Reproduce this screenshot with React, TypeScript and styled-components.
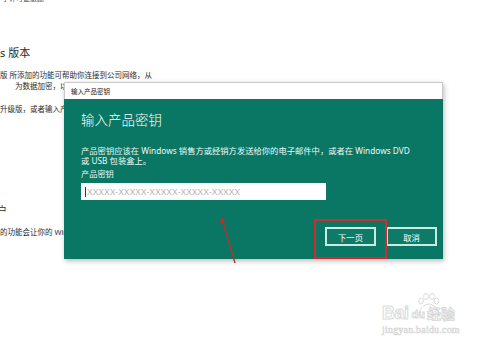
import React from "react";
import styled, { createGlobalStyle } from "styled-components";

const Global = createGlobalStyle`
  html, body { margin: 0; padding: 0; background: #ffffff; }
  body { width: 500px; height: 348px; overflow: hidden; }
`;

const FONT = `"Noto Sans", "Noto Sans CJK SC", sans-serif`;

const Page = styled.div`
  position: relative;
  width: 500px;
  height: 348px;
  overflow: hidden;
  background: #fff;
  font-family: ${FONT};
`;

const BgColumn = styled.div`
  display: flex;
  flex-direction: column;
  padding-left: 0;
  color: #2b2b2b;
`;

const BgLine = styled.div<{ $top: number; $indent?: number; $size?: number; $color?: string; $shift?: number }>`
  margin-top: ${(p) => p.$top}px;
  padding-left: ${(p) => p.$indent ?? 0}px;
  margin-left: ${(p) => p.$shift ?? 0}px;
  font-size: ${(p) => p.$size ?? 7.5}px;
  line-height: ${(p) => Math.round((p.$size ?? 7.5) + 3)}px;
  color: ${(p) => p.$color ?? "#2b2b2b"};
  white-space: nowrap;
`;

const Dialog = styled.div`
  position: absolute;
  left: 64px;
  top: 82px;
  width: 379px;
  display: flex;
  flex-direction: column;
  box-shadow: 1px 2px 5px rgba(0, 0, 0, 0.28);
`;

const TitleBar = styled.div`
  height: 17px;
  box-sizing: border-box;
  border: 1px solid #c9c9c9;
  border-bottom: none;
  background: #ffffff;
  display: flex;
  align-items: center;
  padding-left: 6px;
  font-size: 6.5px;
  color: #222;
`;

const Body = styled.div`
  height: 160px;
  box-sizing: border-box;
  background: #0a7764;
  padding: 13px 6px 0 17px;
  display: flex;
  flex-direction: column;
  color: #ffffff;
`;

const Heading = styled.div`
  font-size: 13.4px;
  line-height: 16px;
  font-weight: 300;
  letter-spacing: 0.1px;
`;

const Desc = styled.div`
  margin-top: 18px;
  display: flex;
  flex-direction: column;
  font-size: 8.3px;
  line-height: 10px;
  color: #eef7f5;
`;

const DescLine = styled.span`
  white-space: nowrap;
`;

const Label = styled.div`
  margin-top: 3px;
  font-size: 8.2px;
  line-height: 10px;
  color: #eef7f5;
`;

const KeyInput = styled.div`
  margin-top: 4px;
  width: 245px;
  height: 17px;
  box-sizing: border-box;
  background: #ffffff;
  display: flex;
  align-items: center;
  padding-left: 4px;
  gap: 1px;
  font-family: "Liberation Sans", Arial, sans-serif;
  font-size: 8.5px;
  color: #b4b4b4;
`;

const Caret = styled.span`
  width: 1px;
  height: 10px;
  background: #333;
`;

const ButtonRow = styled.div`
  margin-top: 27px;
  display: flex;
  justify-content: flex-end;
  gap: 10px;
`;

const Button = styled.div`
  width: 51px;
  height: 19px;
  box-sizing: border-box;
  border: 2px solid #c8ebe3;
  display: flex;
  align-items: center;
  justify-content: center;
  font-size: 8.3px;
  color: #ffffff;
  background: #0d7b68;
`;

const Highlight = styled.div`
  position: absolute;
  left: 314px;
  top: 219px;
  width: 73px;
  height: 40px;
  box-sizing: border-box;
  border: 2px solid #cf2b30;
`;

const ArrowSvg = styled.svg`
  position: absolute;
  left: 0;
  top: 0;
  width: 500px;
  height: 348px;
  pointer-events: none;
`;

const Watermark = styled.div`
  position: absolute;
  left: 382px;
  top: 290px;
  width: 95px;
  display: flex;
  flex-direction: column;
  color: #e2e2e2;
`;

const MarkTop = styled.div`
  position: relative;
  display: flex;
  align-items: flex-end;
  height: 32px;
  font-family: "Liberation Sans", Arial, sans-serif;
`;

const MarkBai = styled.span`
  font-size: 18px;
  line-height: 18px;
  font-weight: 700;
  color: #fff;
  -webkit-text-stroke: 1px #dcdcdc;
  letter-spacing: -0.5px;
`;

const MarkDu = styled.span`
  font-size: 11px;
  line-height: 14px;
  font-weight: 700;
  color: #fff;
  -webkit-text-stroke: 0.8px #d6d6d6;
  margin: 0 2px 1px 3px;
`;

const MarkJy = styled.span`
  font-family: "Noto Sans CJK SC", sans-serif;
  font-size: 14px;
  line-height: 17px;
  font-weight: 700;
  color: #fff;
  -webkit-text-stroke: 0.8px #d6d6d6;
`;

const PawSvg = styled.svg`
  position: absolute;
  left: 33px;
  top: 2px;
`;

const MarkUrl = styled.div`
  margin-top: 2px;
  font-family: "Liberation Serif", serif;
  font-size: 10px;
  line-height: 12px;
  color: #fff;
  -webkit-text-stroke: 0.6px #d6d6d6;
  letter-spacing: 0.2px;
`;

export default function App() {
  return (
    <Page>
      <Global />
      <BgColumn>
        <BgLine $top={-6} $indent={2} $size={7} $color="#555">了许可证激励</BgLine>
        <BgLine $top={42} $size={11}>s 版本</BgLine>
        <BgLine $top={10}>版 所添加的功能可帮助你连接到公司网络，从</BgLine>
        <BgLine $top={0} $indent={15}>为数据加密，以及</BgLine>
        <BgLine $top={12}>升级版，或者输入产</BgLine>
        <BgLine $top={89} $size={10} $shift={-3}>户</BgLine>
        <BgLine $top={10}>的功能会让你的 Win</BgLine>
      </BgColumn>

      <Dialog>
        <TitleBar>输入产品密钥</TitleBar>
        <Body>
          <Heading>输入产品密钥</Heading>
          <Desc>
            <DescLine>产品密钥应该在 Windows 销售方或经销方发送给你的电子邮件中，或者在 Windows DVD</DescLine>
            <DescLine>或 USB 包装盒上。</DescLine>
          </Desc>
          <Label>产品密钥</Label>
          <KeyInput>
            <Caret />
            XXXXX-XXXXX-XXXXX-XXXXX-XXXXX
          </KeyInput>
          <ButtonRow>
            <Button>下一页</Button>
            <Button>取消</Button>
          </ButtonRow>
        </Body>
      </Dialog>

      <Highlight />

      <ArrowSvg viewBox="0 0 500 348">
        <line x1="235" y1="263" x2="222.5" y2="220" stroke="#b8312b" strokeWidth="1.4" />
        <path d="M221.6 216.5 L219.8 223.5 L225.2 222 Z" fill="#b8312b" />
      </ArrowSvg>

      <Watermark>
        <MarkTop>
          <MarkBai>Bai</MarkBai>
          <MarkDu>du</MarkDu>
          <MarkJy>经验</MarkJy>
          <PawSvg width="26" height="26" viewBox="0 0 26 26">
            <g fill="#fff" stroke="#d6d6d6" strokeWidth="0.9">
              <ellipse cx="6" cy="9" rx="2.4" ry="3" />
              <ellipse cx="11" cy="4.5" rx="2.4" ry="3" />
              <ellipse cx="17" cy="4.5" rx="2.4" ry="3" />
              <ellipse cx="21.5" cy="9" rx="2.4" ry="3" />
              <path d="M5 24 C3 18 9 12 14 12 C19 12 25 18 23 24" fill="none" />
            </g>
          </PawSvg>
        </MarkTop>
        <MarkUrl>jingyan.baidu.com</MarkUrl>
      </Watermark>
    </Page>
  );
}
